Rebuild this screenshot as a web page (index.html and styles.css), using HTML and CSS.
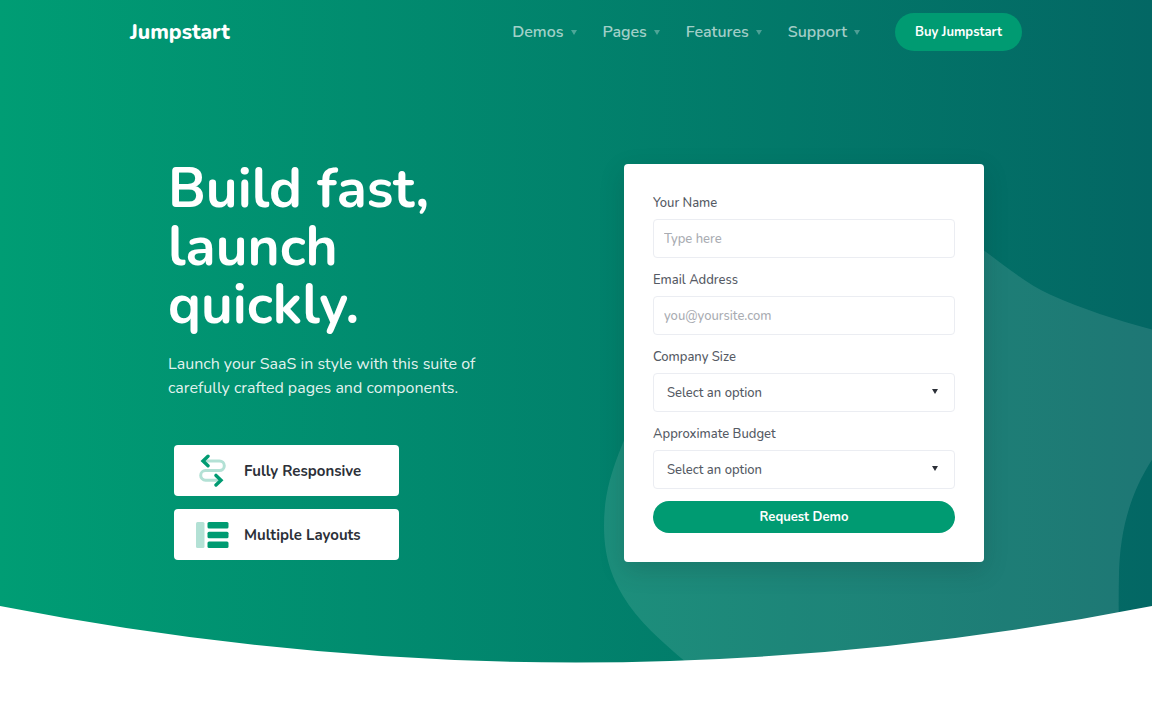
FILE: index.html
```html
<!DOCTYPE html>
<html lang="en">
<head>
<meta charset="utf-8">
<meta name="viewport" content="width=device-width, initial-scale=1">
<title>Jumpstart</title>
<link rel="stylesheet" href="styles.css">
</head>
<body>
<div class="hero">
  <svg class="blob" viewBox="0 0 1152 662" preserveAspectRatio="none" aria-hidden="true">
    <path d="M1152 329C1115 319 1084 309 1050 294C1028 284 1008 268 984 250C930 212 870 190 800 220C720 255 650 380 623 442C608 478 604 500 604 525C604 555 611 575 623 595C638 620 661 640 687 662H1120Q1118 620 1119 573C1120 530 1130 493 1152 459Z"/>
  </svg>
  <header class="topbar">
    <a class="logo" href="#">Jumpstart</a>
    <nav class="nav" aria-label="Main">
      <a class="nav-link" href="#">Demos<svg class="caret" viewBox="0 0 6 5" aria-hidden="true"><path d="M0 0H6L3 5Z"/></svg></a>
      <a class="nav-link" href="#">Pages<svg class="caret" viewBox="0 0 6 5" aria-hidden="true"><path d="M0 0H6L3 5Z"/></svg></a>
      <a class="nav-link" href="#">Features<svg class="caret" viewBox="0 0 6 5" aria-hidden="true"><path d="M0 0H6L3 5Z"/></svg></a>
      <a class="nav-link" href="#">Support<svg class="caret" viewBox="0 0 6 5" aria-hidden="true"><path d="M0 0H6L3 5Z"/></svg></a>
    </nav>
    <a class="button buy" href="#">Buy Jumpstart</a>
  </header>
  <main class="content">
    <section class="intro">
      <h1 class="title">Build fast,<br>launch<br>quickly.</h1>
      <p class="lead">Launch your SaaS in style with this suite of<br>carefully crafted pages and components.</p>
      <ul class="features">
        <li class="feature">
          <svg class="feature-icon" viewBox="0 0 34 34" fill="none" aria-hidden="true">
            <path d="M8 7H24.500A4.800 4.800 0 0 1 24.500 16.600H10.500A4.800 4.800 0 0 0 10.500 26.200H24" stroke="#b3e1d5" stroke-width="3"/>
            <path d="M13 2.200L8 7L13 11.800M21 21.400L26 26.200L21 31" stroke="#009b72" stroke-width="3.400" stroke-linecap="round"/>
          </svg>
          Fully Responsive
        </li>
        <li class="feature">
          <svg class="feature-icon" viewBox="0 0 34 34" aria-hidden="true">
            <rect x="1" y="4" width="8.500" height="26" rx="1.500" fill="#b3e1d5"/>
            <g fill="#009b72">
              <rect x="12.500" y="4" width="21" height="6.500" rx="1.500"/>
              <rect x="12.500" y="13.700" width="21" height="6.500" rx="1.500"/>
              <rect x="12.500" y="23.500" width="21" height="6.500" rx="1.500"/>
            </g>
          </svg>
          Multiple Layouts
        </li>
      </ul>
    </section>
    <form class="card">
      <div class="field">
        <label class="label" for="name">Your Name</label>
        <input class="control" id="name" type="text" placeholder="Type here">
      </div>
      <div class="field">
        <label class="label" for="email">Email Address</label>
        <input class="control" id="email" type="email" placeholder="you@yoursite.com">
      </div>
      <div class="field">
        <label class="label" for="size">Company Size</label>
        <div class="select-wrap">
          <select class="control select" id="size"><option>Select an option</option></select>
          <svg class="select-caret" viewBox="0 0 6 5" aria-hidden="true"><path d="M0 0H6L3 5Z"/></svg>
        </div>
      </div>
      <div class="field">
        <label class="label" for="budget">Approximate Budget</label>
        <div class="select-wrap">
          <select class="control select" id="budget"><option>Select an option</option></select>
          <svg class="select-caret" viewBox="0 0 6 5" aria-hidden="true"><path d="M0 0H6L3 5Z"/></svg>
        </div>
      </div>
      <button class="button submit" type="submit">Request Demo</button>
    </form>
  </main>
  <svg class="divider" viewBox="0 0 1152 58" preserveAspectRatio="none" aria-hidden="true">
    <path d="M0 1Q576 114 1152 1V58H0Z"/>
  </svg>
</div>
</body>
</html>
```

FILE: styles.css
```css
* {
  box-sizing: border-box;
}

body {
  margin: 0;
  background: #fff;
  color: #2c3038;
  font-family: Nunito, Lato, "Open Sans", sans-serif;
  font-size: 13px;
}

a {
  color: inherit;
  text-decoration: none;
}

.hero {
  position: relative;
  background: linear-gradient(to right, #009d74, #036764);
}

.blob {
  position: absolute;
  inset: 0;
  width: 100%;
  height: 100%;
  fill: rgba(255, 255, 255, 0.11);
}

.topbar {
  position: relative;
  display: flex;
  align-items: center;
  max-width: 892px;
  margin: 0 auto;
  padding: 13px 0;
}

.logo {
  color: #fff;
  font-size: 21px;
  font-weight: 800;
  line-height: 32px;
}

.nav {
  display: flex;
  gap: 26px;
  margin-left: auto;
}

.nav-link {
  display: flex;
  align-items: center;
  gap: 7px;
  color: rgba(255, 255, 255, 0.65);
  font-size: 16px;
  font-weight: 600;
  line-height: 24px;
}

.caret {
  width: 6px;
  height: 5px;
  fill: rgba(255, 255, 255, 0.3);
}

.button {
  border: 0;
  border-radius: 20px;
  background: #009b72;
  color: #fff;
  font-family: inherit;
  font-size: 13px;
  font-weight: 700;
  text-align: center;
}

.buy {
  margin-left: 35px;
  padding: 0 20px;
  line-height: 38px;
}

.content {
  position: relative;
  display: flex;
  align-items: flex-start;
  justify-content: space-between;
  max-width: 816px;
  margin: 0 auto;
  padding: 96px 0 43px;
}

.title {
  margin: 0;
  color: #fff;
  font-size: 55px;
  font-weight: 700;
  line-height: 58px;
}

.lead {
  margin: 18px 0 45px;
  color: rgba(255, 255, 255, 0.9);
  font-size: 16px;
  line-height: 24px;
}

.features {
  display: flex;
  flex-direction: column;
  align-items: flex-start;
  gap: 13px;
  margin: 0;
  padding: 0 6px;
  list-style: none;
}

.feature {
  display: flex;
  align-items: center;
  gap: 15px;
  height: 51px;
  padding: 0 38px 0 21px;
  border-radius: 4px;
  background: #fff;
  font-size: 15px;
  font-weight: 700;
}

.feature-icon {
  width: 34px;
  height: 34px;
}

.card {
  display: flex;
  flex-direction: column;
  gap: 12px;
  width: 360px;
  margin-top: 4px;
  padding: 29px;
  border-radius: 4px;
  background: #fff;
  box-shadow: 0 8px 24px rgba(20, 50, 50, 0.2);
}

.field {
  display: flex;
  flex-direction: column;
  gap: 6px;
}

.label {
  color: #555a64;
  font-size: 13px;
  font-weight: 500;
  line-height: 20px;
}

.control {
  width: 100%;
  height: 39px;
  padding: 0 10px;
  border: 1px solid #ebedf2;
  border-radius: 4px;
  background: #fff;
  color: #555a64;
  font-family: inherit;
  font-size: 13px;
  font-weight: 500;
}

.control::placeholder {
  color: #a9acb2;
  opacity: 1;
}

.select-wrap {
  position: relative;
  height: 39px;
}

.select {
  padding: 0 28px 0 13px;
  appearance: none;
}

.select-caret {
  position: absolute;
  top: 16px;
  right: 17px;
  width: 6px;
  height: 5px;
  fill: #2c3038;
  pointer-events: none;
}

.submit {
  height: 32px;
  padding: 0;
}

.divider {
  display: block;
  position: relative;
  width: 100%;
  height: 58px;
  fill: #fff;
}
```
